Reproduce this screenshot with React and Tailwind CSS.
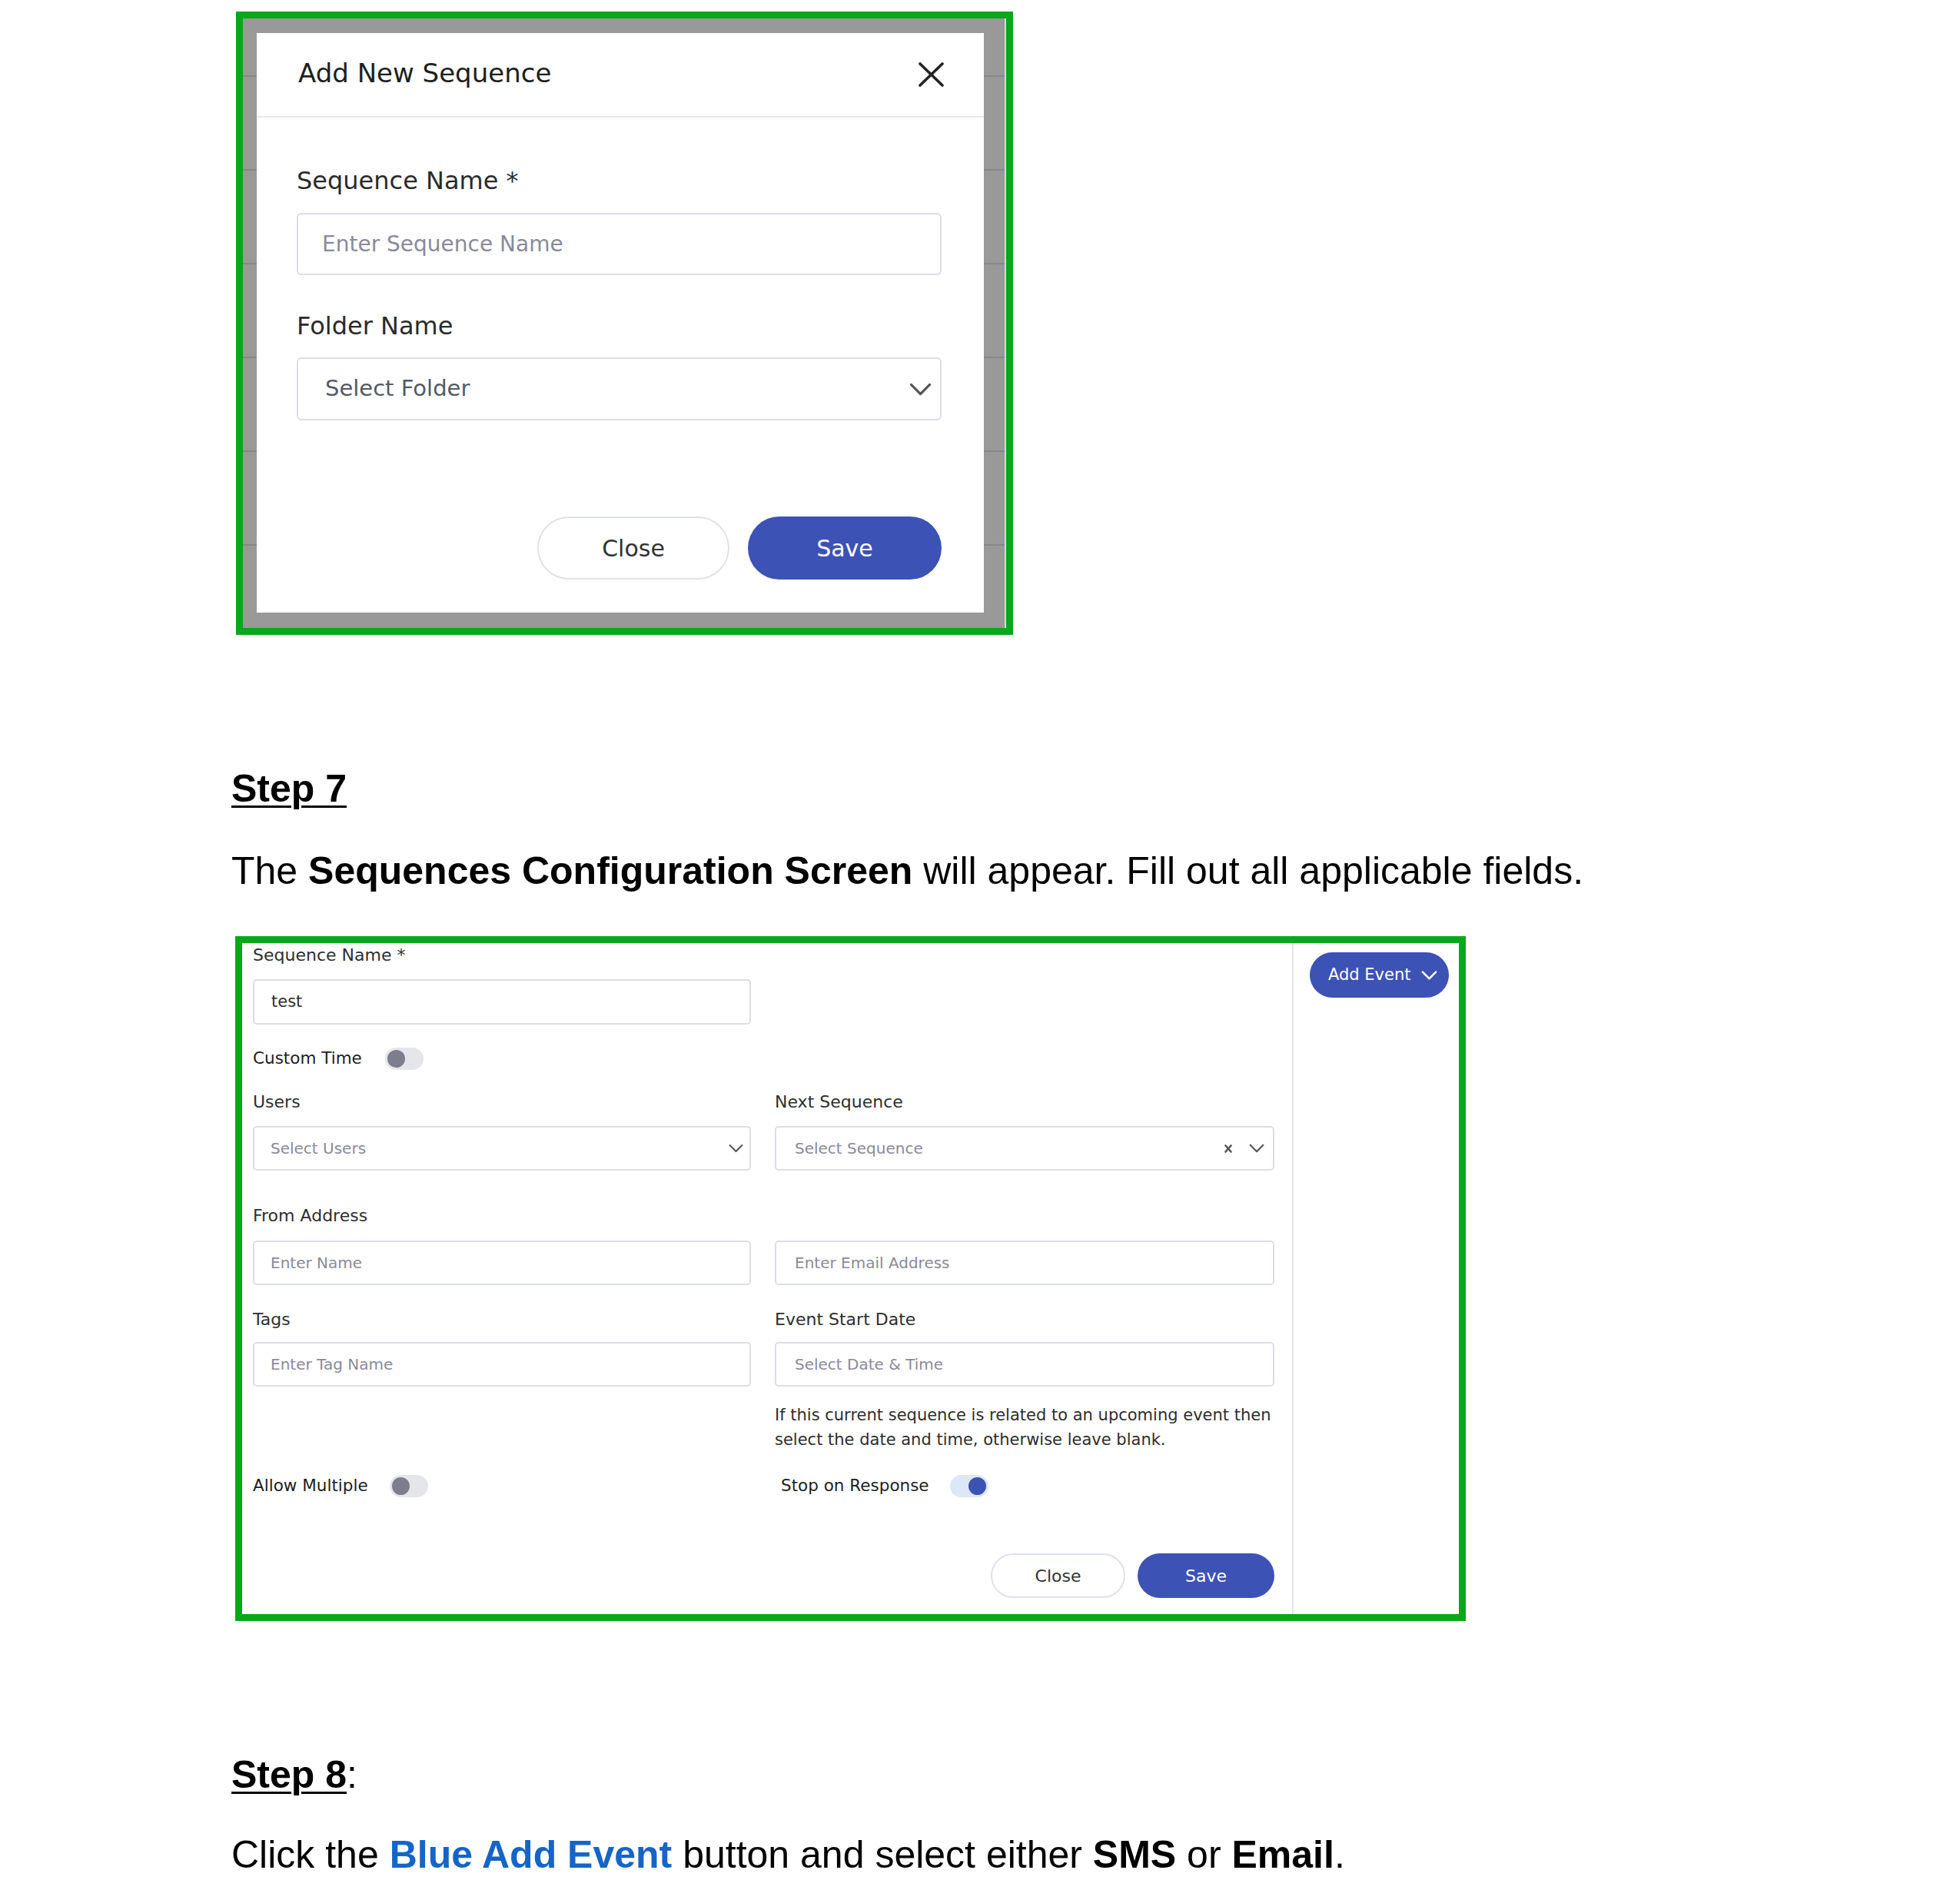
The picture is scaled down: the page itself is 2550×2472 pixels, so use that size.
import React from "react";

const DV = "font-['DejaVu_Sans',sans-serif]";

function Chevron({ className, color = "currentColor", sw = 2.5 }) {
  return (
    <svg viewBox="0 0 24 14" className={className} fill="none" stroke={color} strokeWidth={sw} strokeLinecap="round" strokeLinejoin="round">
      <polyline points="2,2 12,12 22,2" />
    </svg>
  );
}

function Toggle({ on }) {
  return (
    <div className={`w-[50px] h-[29px] rounded-full flex items-center px-[3px] ${on ? "bg-[#dce8f5] justify-end" : "bg-[#e5e6ea] justify-start"}`}>
      <div className={`w-[23px] h-[23px] rounded-full ${on ? "bg-[#3d52b5]" : "bg-[#7c7e8e]"}`} />
    </div>
  );
}

function Field({ children, className = "" }) {
  return (
    <div className={`h-[58px] border-2 border-[#dcdde9] rounded-[5px] flex items-center pl-[21px] text-[20px] text-[#8a8a98] ${className}`}>
      {children}
    </div>
  );
}

function Label({ children, className = "" }) {
  return <div className={`text-[22px] leading-[28px] text-[#2e2e2e] ${className}`}>{children}</div>;
}

export default function App() {
  return (
    <div className="bg-white w-[2550px] min-h-[2472px] pl-[301px] pt-[15px] overflow-hidden font-['Liberation_Sans',Arial,sans-serif] text-black">
      {/* Box 1 */}
      <div className="ml-[6px] w-[1011px] border-[9px] border-[#07a81a]">
        <div className="bg-[#999999] bg-[repeating-linear-gradient(to_bottom,transparent_0px,transparent_74px,#878787_74px,#878787_76px,transparent_76px,transparent_122px)] pl-[18px] pt-[19px] pr-[27px] pb-[20px] border-r-2 border-[#dadada]">
          <div className={`bg-white w-[946px] h-[754px] flex flex-col ${DV}`}>
            <div className="h-[110px] border-b-2 border-[#e6e7f1] pl-[54px] pr-[51px] flex items-start justify-between">
              <div className="pt-[32px] text-[34px] leading-[40px] text-[#1f1f1f]">Add New Sequence</div>
              <svg className="mt-[38px] w-[35px] h-[32px]" viewBox="0 0 35 32" fill="none" stroke="#222" strokeWidth="3.6" strokeLinecap="round">
                <line x1="3" y1="2" x2="32" y2="30" />
                <line x1="32" y1="2" x2="3" y2="30" />
              </svg>
            </div>
            <div className="pt-[62px] pl-[52px] pr-[55px]">
              <div className="text-[32px] leading-[40px] text-[#2b2b2b]">Sequence Name *</div>
              <div className="mt-[22px] h-[81px] border-2 border-[#dcdde9] rounded-[6px] flex items-center pl-[31px] text-[28px] text-[#8a8a99]">
                Enter Sequence Name
              </div>
              <div className="mt-[46px] text-[32px] leading-[40px] text-[#2b2b2b]">Folder Name</div>
              <div className="mt-[21px] h-[82px] border-2 border-[#dcdde9] rounded-[6px] flex items-center justify-between pl-[35px] pr-[11px] text-[29px] text-[#555a66]">
                <span>Select Folder</span>
                <Chevron className="w-[29px] h-[17px]" color="#555" sw={2.6} />
              </div>
              <div className="mt-[125px] flex justify-end gap-[24px]">
                <div className="w-[250px] h-[82px] rounded-full border-2 border-[#e0e1ef] flex items-center justify-center text-[30px] text-[#333]">Close</div>
                <div className="w-[252px] h-[82px] rounded-full bg-[#3d52b5] flex items-center justify-center text-[30px] text-white">Save</div>
              </div>
            </div>
          </div>
        </div>
      </div>

      {/* Step 7 */}
      <div className="mt-[175px] text-[50px] leading-[50px]">
        <span className="font-bold underline decoration-[3px] underline-offset-[5px]">Step 7</span>
      </div>
      <div className="mt-[57px] text-[50px] leading-[50px] whitespace-nowrap">
        The <span className="font-bold">Sequences Configuration Screen</span> will appear. Fill out all applicable fields.
      </div>

      {/* Box 2 */}
      <div className={`ml-[5px] mt-[60px] w-[1601px] h-[891px] border-[9px] border-[#07a81a] bg-white flex ${DV}`}>
        <div className="w-[1368px] h-full border-r-2 border-[#e3e4ec] pl-[14px] pr-[23px] pt-[2px]">
          <Label>Sequence Name *</Label>
          <div className="mt-[17px] w-[648px] h-[59px] border-2 border-[#dcdde9] rounded-[5px] flex items-center pl-[22px] text-[21px] text-[#2e2e2e]">test</div>

          <div className="mt-[30px] flex items-center h-[29px]">
            <span className="w-[172px] text-[21.5px] text-[#1e1e1e]">Custom Time</span>
            <Toggle on={false} />
          </div>

          <div className="mt-[28px] grid grid-cols-[648px_650px] gap-x-[31px]">
            <div>
              <Label>Users</Label>
              <Field className="mt-[17px] justify-between pr-[8px]">
                <span>Select Users</span>
                <Chevron className="w-[19px] h-[12px]" color="#555" sw={2.6} />
              </Field>
            </div>
            <div>
              <Label>Next Sequence</Label>
              <Field className="mt-[17px] justify-between pr-[11px] pl-[24px]">
                <span>Select Sequence</span>
                <span className="flex items-center gap-[22px]">
                  <svg className="w-[10px] h-[11px]" viewBox="0 0 10 11" fill="none" stroke="#555" strokeWidth="2.6" strokeLinecap="round">
                    <line x1="1.5" y1="1.5" x2="8.5" y2="9.5" />
                    <line x1="8.5" y1="1.5" x2="1.5" y2="9.5" />
                  </svg>
                  <Chevron className="w-[20px] h-[12px]" color="#555" sw={2.6} />
                </span>
              </Field>
            </div>
          </div>

          <Label className="mt-[45px]">From Address</Label>
          <div className="mt-[18px] grid grid-cols-[648px_650px] gap-x-[31px]">
            <Field>Enter Name</Field>
            <Field className="pl-[24px]">Enter Email Address</Field>
          </div>

          <div className="mt-[31px] grid grid-cols-[648px_650px] gap-x-[31px]">
            <div>
              <Label>Tags</Label>
              <Field className="mt-[15px]">Enter Tag Name</Field>
            </div>
            <div>
              <Label>Event Start Date</Label>
              <Field className="mt-[15px] pl-[24px]">Select Date &amp; Time</Field>
              <div className="mt-[21px] text-[21px] leading-[32px] text-[#2e2e2e] whitespace-nowrap">
                If this current sequence is related to an upcoming event then
                <br />
                select the date and time, otherwise leave blank.
              </div>
            </div>
          </div>

          <div className="mt-[30px] grid grid-cols-[648px_650px] gap-x-[31px]">
            <div className="flex items-center h-[29px]">
              <span className="w-[178px] text-[21.5px] text-[#1e1e1e]">Allow Multiple</span>
              <Toggle on={false} />
            </div>
            <div className="flex items-center h-[29px] pl-[8px]">
              <span className="w-[220px] text-[21.5px] text-[#1e1e1e]">Stop on Response</span>
              <Toggle on={true} />
            </div>
          </div>

          <div className="mt-[73px] flex justify-end gap-[16px]">
            <div className="w-[175px] h-[58px] rounded-full border-2 border-[#e0e1ef] flex items-center justify-center text-[22px] text-[#333]">Close</div>
            <div className="w-[178px] h-[58px] rounded-full bg-[#3d52b5] flex items-center justify-center text-[22px] text-white">Save</div>
          </div>
        </div>
        <div className="flex-1 pl-[21px] pt-[12px]">
          <div className="w-[181px] h-[59px] rounded-full bg-[#3d52b5] flex items-center pl-[24px] gap-[13px] text-[21px] text-white">
            <span>Add Event</span>
            <Chevron className="w-[21px] h-[12px]" color="#fff" sw={3} />
          </div>
        </div>
      </div>

      {/* Step 8 */}
      <div className="mt-[175px] text-[50px] leading-[50px]">
        <span className="font-bold underline decoration-[3px] underline-offset-[5px]">Step 8</span>:
      </div>
      <div className="mt-[54px] text-[50px] leading-[50px] whitespace-nowrap">
        Click the <span className="font-bold text-[#1565c8]">Blue Add Event</span> button and select either <span className="font-bold">SMS</span> or <span className="font-bold">Email</span>.
      </div>
    </div>
  );
}
